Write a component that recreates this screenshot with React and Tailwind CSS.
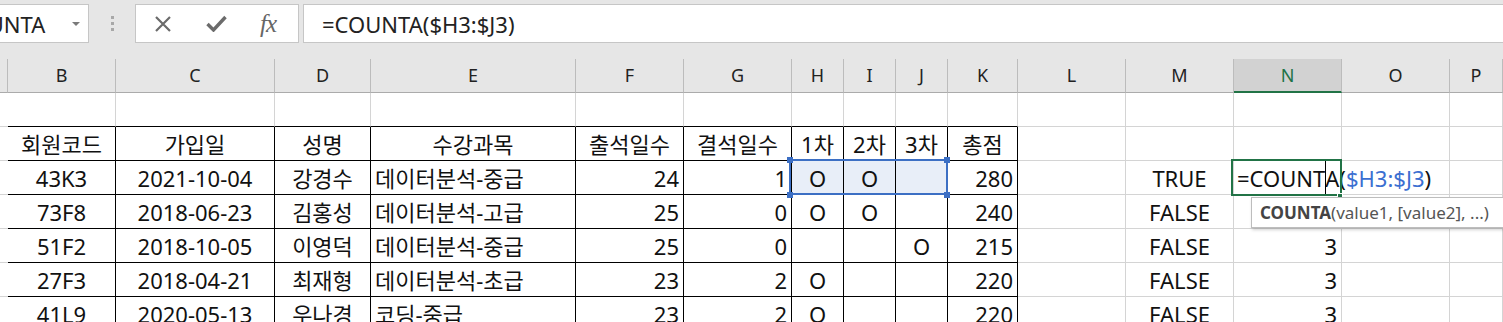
import React from "react";

const COLS = ["A", "B", "C", "D", "E", "F", "G", "H", "I", "J", "K", "L", "M", "N", "O", "P"];

const ROWS = [
  ["", "", "", "", "", "", "", "", "", "", "", "", "", "", "", ""],
  ["", "회원코드", "가입일", "성명", "수강과목", "출석일수", "결석일수", "1차", "2차", "3차", "총점", "", "", "", "", ""],
  ["", "43K3", "2021-10-04", "강경수", "데이터분석-중급", "24", "1", "O", "O", "", "280", "", "TRUE", "__F__", "", ""],
  ["", "73F8", "2018-06-23", "김홍성", "데이터분석-고급", "25", "0", "O", "O", "", "240", "", "FALSE", "", "", ""],
  ["", "51F2", "2018-10-05", "이영덕", "데이터분석-중급", "25", "0", "", "", "O", "215", "", "FALSE", "3", "", ""],
  ["", "27F3", "2018-04-21", "최재형", "데이터분석-초급", "23", "2", "O", "", "", "220", "", "FALSE", "3", "", ""],
  ["", "41L9", "2020-05-13", "우나경", "코딩-중급", "23", "2", "O", "", "", "220", "", "FALSE", "3", "", ""],
];

const DATA_ALIGN = [
  "justify-center",
  "justify-center",
  "justify-center",
  "justify-center",
  "justify-start",
  "justify-end",
  "justify-end",
  "justify-center",
  "justify-center",
  "justify-center",
  "justify-end",
  "justify-center",
  "justify-center",
  "justify-end",
  "justify-start",
  "justify-start",
];

const GRID =
  "grid grid-cols-[8px_108px_159px_96px_205px_108px_108px_52px_52px_52px_70px_108px_108px_108px_108px_1fr]";

function Cell({ r, c, value }) {
  const inTable = c >= 1 && c <= 10;
  const rightBlack = r >= 1 && c <= 10;
  const bottomBlack = inTable;
  const align = r === 1 ? "justify-center" : DATA_ALIGN[c];
  const selected = r === 2 && c >= 7 && c <= 9;
  const isFormula = value === "__F__";
  return (
    <div
      className={
        "h-[34px] flex items-center px-[4px] whitespace-nowrap border-r border-b " +
        (rightBlack ? "border-r-black " : "border-r-[#d4d4d4] ") +
        (bottomBlack ? "border-b-black " : "border-b-[#d4d4d4] ") +
        (selected ? "bg-[#e8eef8] " : "bg-white ") +
        (isFormula ? "overflow-visible relative z-10 justify-start pl-[3px] " : "overflow-hidden " + align)
      }
    >
      {isFormula ? (
        <span className="leading-[34px]">
          =COUNT
          <span className="relative">
            <span className="absolute left-0 top-[-2px] h-[34px] w-px bg-black" />A
          </span>
          (<span className="text-[#3b6fd1]">$H3:$J3</span>)
        </span>
      ) : (
        <span className="leading-[34px]">{value}</span>
      )}
    </div>
  );
}

export default function App() {
  return (
    <div className="w-[1503px] h-[322px] overflow-hidden bg-white font-['Noto_Sans','Noto_Sans_CJK_KR',sans-serif] text-[#111]">
      {/* Formula bar */}
      <div className="h-[59px] bg-[#e6e6e6] flex items-start pt-[4px]">
        <div className="w-[89px] h-[39px] bg-white border border-l-0 border-[#c6c6c6] overflow-hidden relative flex items-center">
          <span className="ml-[-43px] text-[22px] text-[#222] leading-none">COUNTA</span>
          <span className="absolute left-[72px] top-[17px] w-0 h-0 border-l-[4px] border-r-[4px] border-t-[4px] border-l-transparent border-r-transparent border-t-[#7a7a7a]" />
        </div>
        <div className="w-[46px] h-[39px] flex flex-col items-center justify-center gap-[3px]">
          <span className="w-[3px] h-[3px] bg-[#a8a8a8]" />
          <span className="w-[3px] h-[3px] bg-[#a8a8a8]" />
          <span className="w-[3px] h-[3px] bg-[#a8a8a8]" />
        </div>
        <div className="w-[164px] h-[39px] bg-white border border-[#c6c6c6] flex items-center">
          <svg className="ml-[18px]" width="18" height="16" viewBox="0 0 18 16">
            <path d="M2 1 L16 15 M16 1 L2 15" stroke="#6b6b6b" strokeWidth="2.2" fill="none" />
          </svg>
          <svg className="ml-[34px]" width="21" height="17" viewBox="0 0 21 17">
            <path d="M1.5 9 L7.5 15 L19.5 2" stroke="#6b6b6b" strokeWidth="3.4" fill="none" strokeLinejoin="miter" />
          </svg>
          <span className="ml-[33px] font-['Liberation_Serif',serif] italic text-[25px] leading-none text-[#666] tracking-[-1px]">
            fx
          </span>
        </div>
        <div className="ml-[4px] flex-1 h-[39px] bg-white border border-r-0 border-[#c6c6c6] flex items-center pl-[18px]">
          <span className="text-[22px] text-[#222] leading-none">=COUNTA($H3:$J3)</span>
        </div>
      </div>

      {/* Grid */}
      <div className="relative">
        <div className={GRID + " h-[34px] bg-[#e6e6e6] text-[18px]"}>
          {COLS.map((l, i) => (
            <div
              key={l}
              className={
                "h-[34px] flex items-center justify-center overflow-hidden border-r border-r-[#bcbcbc] " +
                (l === "N"
                  ? "bg-[#d2d2d2] text-[#217346] border-b-2 border-b-[#217346]"
                  : "text-[#222] border-b border-b-[#ababab]")
              }
            >
              {i === 0 ? "" : l}
            </div>
          ))}
        </div>
        <div className={GRID + " text-[22px]"}>
          {ROWS.map((row, r) => row.map((v, c) => <Cell key={r + "-" + c} r={r} c={c} value={v} />))}
        </div>

        {/* Selection H3:J3 */}
        <div className="absolute left-[789px] top-[100px] w-[159px] h-[36px] border-2 border-[#3c6fc4] pointer-events-none z-20" />
        <div className="absolute left-[787px] top-[98px] w-[6px] h-[6px] bg-[#3c6fc4] z-20" />
        <div className="absolute left-[944px] top-[98px] w-[6px] h-[6px] bg-[#3c6fc4] z-20" />
        <div className="absolute left-[787px] top-[133px] w-[6px] h-[6px] bg-[#3c6fc4] z-20" />
        <div className="absolute left-[944px] top-[133px] w-[6px] h-[6px] bg-[#3c6fc4] z-20" />

        {/* Active cell N3 */}
        <div className="absolute left-[1231px] top-[100px] w-[111px] h-[37px] border-2 border-[#217346] pointer-events-none z-20" />
        <div className="absolute left-[1337px] top-[134px] w-[6px] h-[6px] bg-[#217346] border border-white z-20" />

        {/* Tooltip */}
        <div className="absolute left-[1251px] top-[138px] w-[262px] h-[31px] bg-white border border-[#bdbdbd] shadow-[1px_2px_3px_rgba(0,0,0,0.18)] flex items-center pl-[8px] z-30 text-[17px] whitespace-nowrap">
          <span className="font-bold text-[#444]">COUNTA</span>
          <span className="text-[#555]">(value1, [value2], ...)</span>
        </div>
      </div>
    </div>
  );
}
